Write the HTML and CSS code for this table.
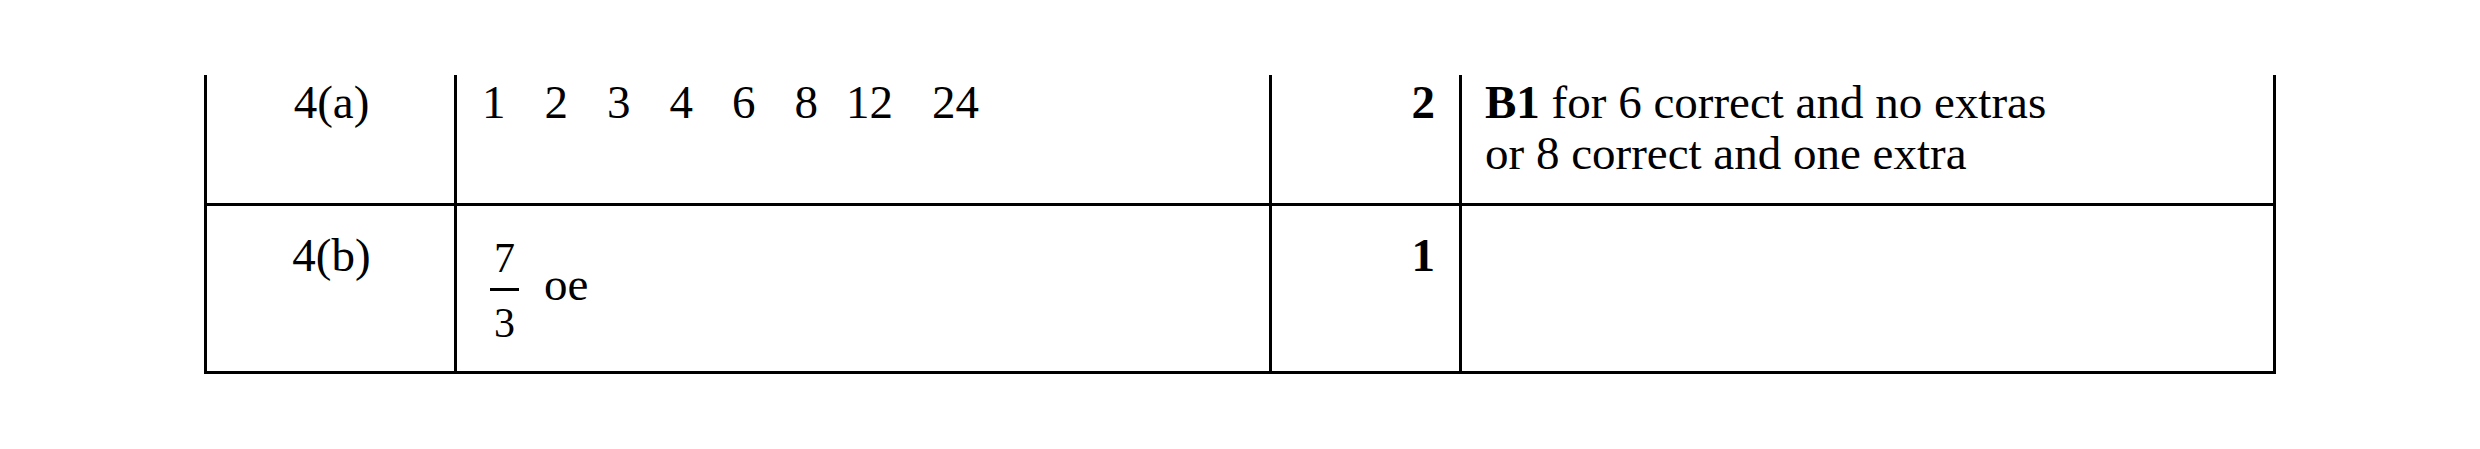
FILE: index.html
```html
<!DOCTYPE html>
<html lang="en">
<head>
<meta charset="utf-8">
<title>Mark scheme</title>
<link rel="stylesheet" href="styles.css">
</head>
<body>
<div class="scheme">
  <div class="cell q first">4(a)</div>
  <div class="cell answer first">
    <div class="factors">
      <span>1</span><span>2</span><span>3</span><span>4</span><span>6</span><span>8</span><span class="tight">12</span><span>24</span>
    </div>
  </div>
  <div class="cell marks first">2</div>
  <div class="cell notes last first"><b>B1</b> for 6 correct and no extras<br>or 8 correct and one extra</div>

  <div class="cell q">4(b)</div>
  <div class="cell answer">
    <div class="expr">
      <span class="frac"><span class="num">7</span><span class="bar"></span><span class="den">3</span></span>
      <span class="oe">oe</span>
    </div>
  </div>
  <div class="cell marks">1</div>
  <div class="cell notes last"></div>
</div>
</body>
</html>
```
FILE: styles.css
```css
html, body {
  margin: 0;
  padding: 0;
  background: #ffffff;
}
body {
  padding-top: 75px;
  font-family: "Liberation Serif", "Times New Roman", serif;
  font-size: 47px;
  line-height: 51px;
  color: #000000;
}
.scheme {
  margin-left: 204px;
  display: grid;
  grid-template-columns: 250px 815px 190px 817px;
  grid-template-rows: 131px 168px;
  width: 2072px;
}
.cell {
  box-sizing: border-box;
  border-left: 3px solid #000;
  border-bottom: 3px solid #000;
  padding-top: 24px;
}
.cell.first {
  padding-top: 2px;
}
.cell.last {
  border-right: 3px solid #000;
}
.q {
  text-align: center;
  padding-left: 2px;
}
.answer {
  padding-left: 25px;
}
.marks {
  text-align: right;
  font-weight: bold;
  padding-right: 24px;
}
.notes {
  padding-left: 23px;
}
.factors {
  display: flex;
  gap: 39px;
}
.factors .tight {
  margin-left: -11px;
}
.expr {
  display: flex;
  align-items: flex-start;
  font-family: "Liberation Serif", "Times New Roman", serif;
}
.frac {
  display: flex;
  flex-direction: column;
  align-items: center;
  width: 29px;
  margin-left: 8px;
  margin-top: 7px;
  font-size: 42px;
  line-height: 42px;
}
.frac .num,
.frac .den {
  display: block;
}
.frac .bar {
  display: block;
  width: 29px;
  height: 3px;
  background: #000;
  margin: 9px 0 11px;
}
.oe {
  margin-left: 25px;
  margin-top: 29px;
}
```
